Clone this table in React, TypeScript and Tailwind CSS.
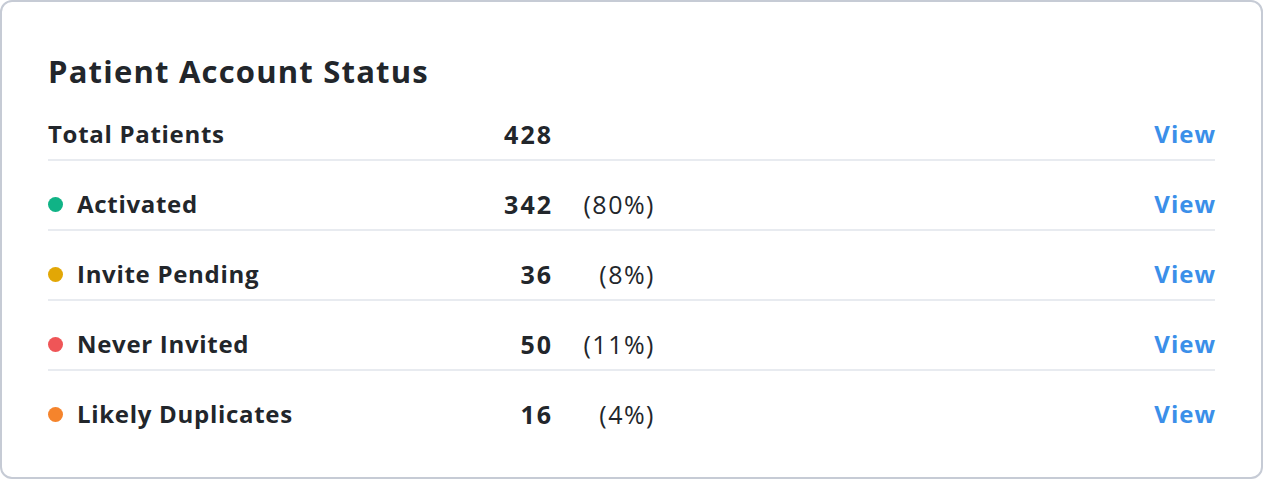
import React from 'react';

type Row = {
  label: string;
  count: number;
  pct?: string;
  dot?: string;
};

const rows: Row[] = [
  { label: 'Total Patients', count: 428 },
  { label: 'Activated', count: 342, pct: '(80%)', dot: 'bg-[#10b386]' },
  { label: 'Invite Pending', count: 36, pct: '(8%)', dot: 'bg-[#e2a706]' },
  { label: 'Never Invited', count: 50, pct: '(11%)', dot: 'bg-[#ef5557]' },
  { label: 'Likely Duplicates', count: 16, pct: '(4%)', dot: 'bg-[#f5842c]' },
];

const App: React.FC = () => {
  return (
    <div className="w-[1264px] h-[480px] bg-white font-['Open_Sans','Lato',sans-serif] text-[#22262b]">
      <div className="w-[1263px] h-[479px] border-2 border-[#c6cbd5] rounded-[12px] px-[46px] pt-[51px]">
        <h2 className="text-[31px] leading-[36px] font-bold tracking-[1.2px]">Patient Account Status</h2>

        <div className="mt-[29px]">
          {rows.map((row, i) => (
            <div
              key={row.label}
              className={`flex items-center pb-[9px] ${i === 0 ? '' : 'pt-[27px]'} ${
                i < rows.length - 1 ? 'border-b-2 border-[#e8ebf0]' : ''
              }`}
            >
              <div className="w-[406px] flex items-center text-[24px] leading-[32px] font-bold tracking-[0.7px]">
                {row.dot && <span className={`w-[15px] h-[15px] rounded-full ${row.dot} mr-[14px]`} />}
                <span>{row.label}</span>
              </div>
              <div className="w-[99px] text-right text-[25px] leading-[32px] font-bold tracking-[2px]">{row.count}</div>
              <div className="w-[102px] text-right text-[25px] leading-[32px] font-normal tracking-[1.5px]">{row.pct}</div>
              <div className="flex-1 text-right -mr-[1px]">
                <a href="#" className="text-[24px] leading-[32px] font-bold tracking-[1px] text-[#3b8fe9]">
                  View
                </a>
              </div>
            </div>
          ))}
        </div>
      </div>
    </div>
  );
};

export default App;
